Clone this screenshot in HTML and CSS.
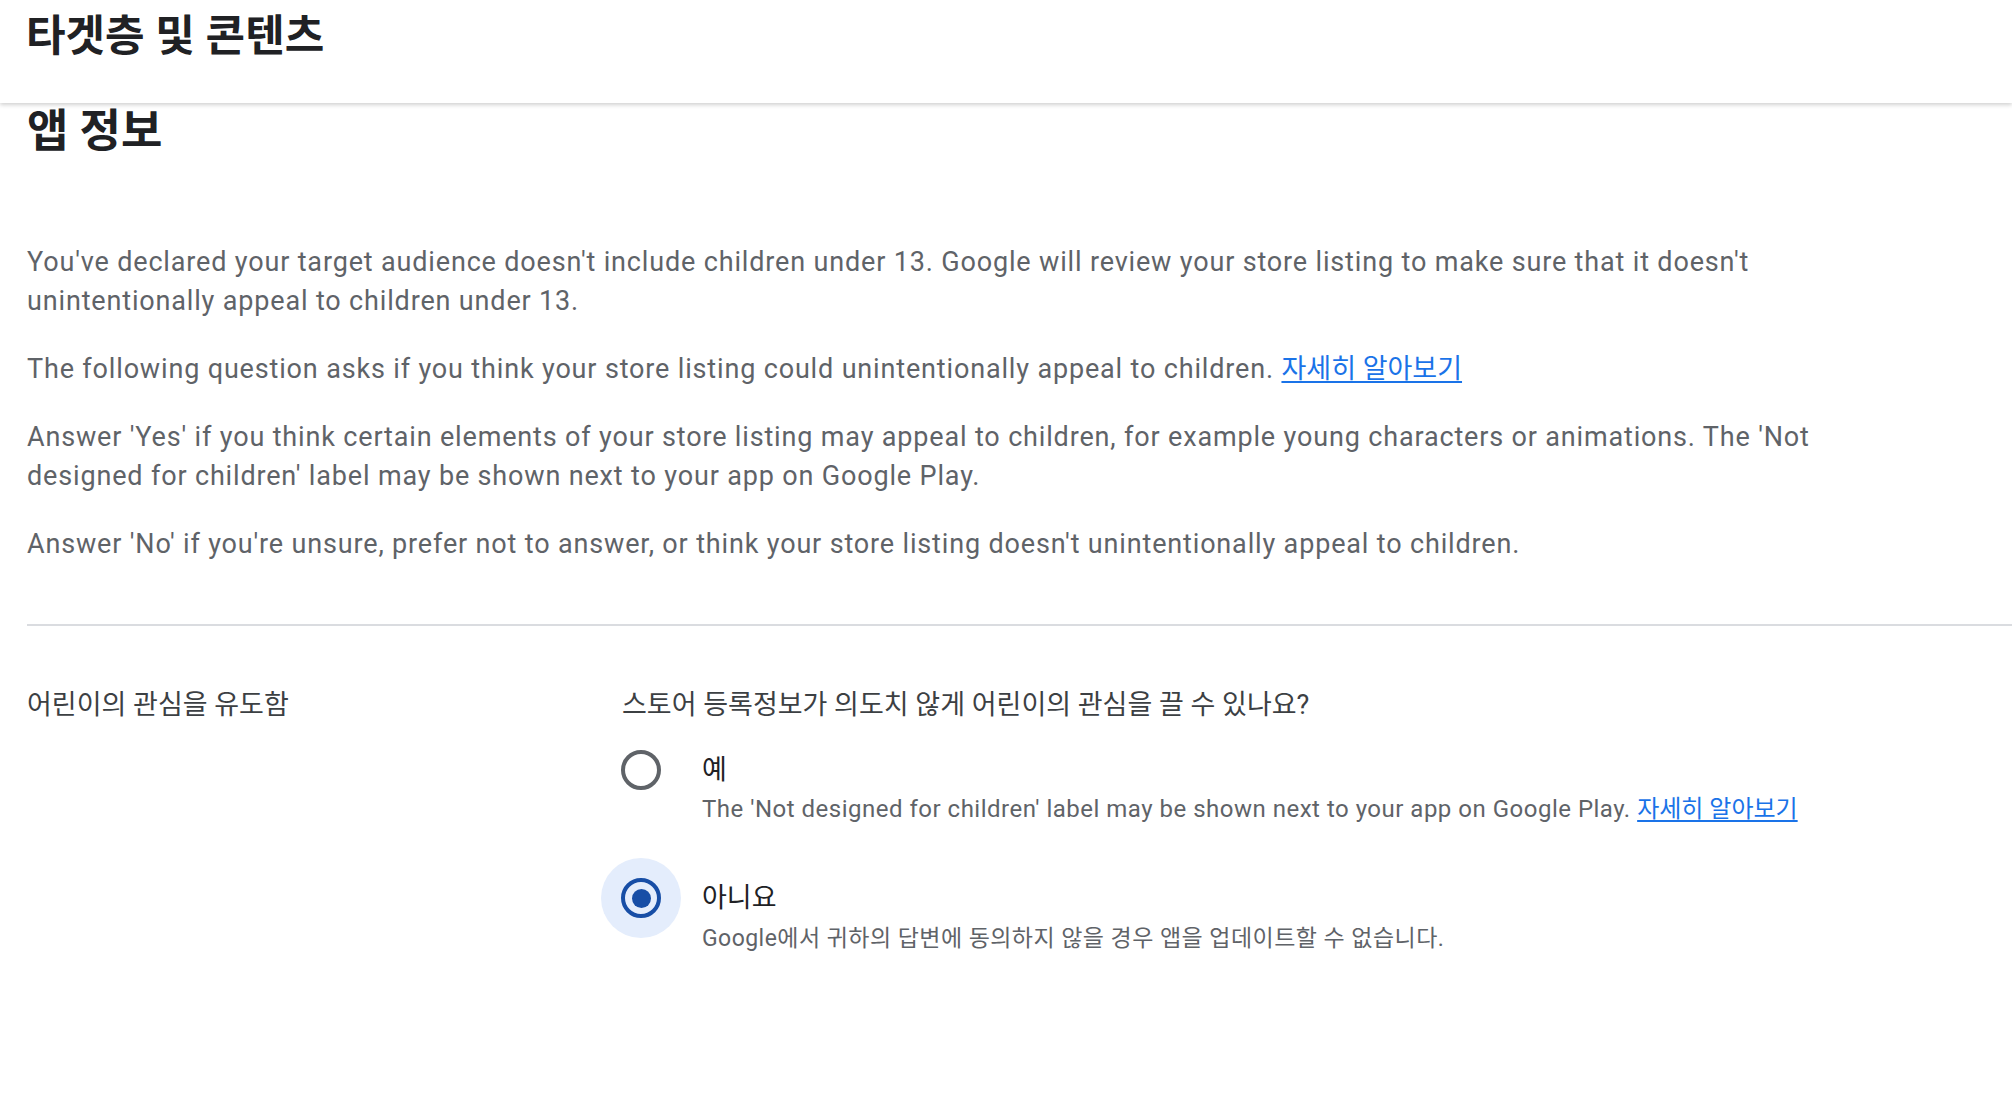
FILE: index.html
```html
<!DOCTYPE html>
<html lang="ko">
<head>
<meta charset="utf-8">
<title>타겟층 및 콘텐츠</title>
<link rel="stylesheet" href="styles.css">
</head>
<body>
<header class="topbar">
  <h1 class="page-title">타겟층 및 콘텐츠</h1>
</header>
<main class="content">
  <h2 class="section-title">앱 정보</h2>
  <div class="intro">
    <p>You've declared your target audience doesn't include children under 13. Google will review your store listing to make sure that it doesn't unintentionally appeal to children under 13.</p>
    <p>The following question asks if you think your store listing could unintentionally appeal to children. <a href="#" class="link">자세히 알아보기</a></p>
    <p>Answer 'Yes' if you think certain elements of your store listing may appeal to children, for example young characters or animations. The 'Not designed for children' label may be shown next to your app on Google Play.</p>
    <p>Answer 'No' if you're unsure, prefer not to answer, or think your store listing doesn't unintentionally appeal to children.</p>
  </div>
  <hr class="divider">
  <section class="field">
    <div class="field-label">어린이의 관심을 유도함</div>
    <div class="field-body">
      <div class="question">스토어 등록정보가 의도치 않게 어린이의 관심을 끌 수 있나요?</div>
      <div class="options">
        <div class="option">
          <div class="radio-box"><span class="radio"></span></div>
          <div class="option-text">
            <div class="option-label">예</div>
            <div class="option-desc latin">The 'Not designed for children' label may be shown next to your app on Google Play. <a href="#" class="link">자세히 알아보기</a></div>
          </div>
        </div>
        <div class="option">
          <div class="radio-box checked"><span class="radio"></span></div>
          <div class="option-text">
            <div class="option-label">아니요</div>
            <div class="option-desc ko">Google에서 귀하의 답변에 동의하지 않을 경우 앱을 업데이트할 수 없습니다.</div>
          </div>
        </div>
      </div>
    </div>
  </section>
</main>
</body>
</html>
```

FILE: styles.css
```css
html, body {
  margin: 0;
  padding: 0;
  background: #ffffff;
}

body {
  font-family: Roboto, "Noto Sans CJK KR", sans-serif;
  color: #5f6368;
  overflow: hidden;
}

.topbar {
  height: 103px;
  box-sizing: border-box;
  padding: 8px 0 0 26px;
  background: #ffffff;
  box-shadow: 0 2px 4px rgba(0, 0, 0, 0.18);
  position: relative;
  z-index: 1;
}

.page-title {
  margin: 0;
  font-size: 43px;
  line-height: 56px;
  font-weight: 700;
  color: #202124;
}

.content {
  padding-left: 27px;
}

.section-title {
  margin: 0;
  padding-top: 3px;
  font-size: 45px;
  line-height: 52px;
  font-weight: 700;
  color: #202124;
}

.intro {
  margin-top: 85px;
  max-width: 1840px;
}

.intro p {
  margin: 0 0 29px 0;
  font-size: 27px;
  line-height: 39px;
  letter-spacing: 0.84px;
  color: #5f6368;
}

.intro p:last-child {
  margin-bottom: 0;
}

.link {
  color: #1a73e8;
  text-decoration: underline;
  text-underline-offset: 3px;
  letter-spacing: 0;
}

.divider {
  margin: 60px 0 0 0;
  border: 0;
  height: 2px;
  background: #dadce0;
}

.field {
  display: flex;
  margin-top: 59px;
}

.field-label {
  width: 595px;
  flex: none;
  font-size: 27px;
  line-height: 40px;
  color: #3c4043;
}

.field-body {
  flex: 1;
}

.question {
  font-size: 27px;
  line-height: 40px;
  color: #3c4043;
}

.options {
  margin-top: 25px;
  display: flex;
  flex-direction: column;
  gap: 52px;
}

.option {
  display: flex;
  align-items: flex-start;
  margin-left: -21px;
}

.radio-box {
  width: 80px;
  height: 80px;
  flex: none;
  margin-top: -20px;
  margin-right: 21px;
  border-radius: 50%;
  display: flex;
  align-items: center;
  justify-content: center;
}

.radio {
  width: 40px;
  height: 40px;
  box-sizing: border-box;
  border: 4px solid #5f6368;
  border-radius: 50%;
  display: flex;
  align-items: center;
  justify-content: center;
}

.radio-box.checked {
  background: #e4edfc;
}

.radio-box.checked .radio {
  border-color: #174ea6;
}

.radio-box.checked .radio::after {
  content: "";
  width: 19px;
  height: 19px;
  border-radius: 50%;
  background: #174ea6;
}

.option-label {
  font-size: 27px;
  line-height: 40px;
  color: #202124;
}

.option-desc {
  margin-top: 2px;
  font-size: 23px;
  line-height: 34px;
  color: #5f6368;
}

.option-desc.latin {
  font-size: 24px;
  letter-spacing: 0.5px;
}

.option-desc.ko {
  margin-top: 4px;
  letter-spacing: 0.45px;
}
```
